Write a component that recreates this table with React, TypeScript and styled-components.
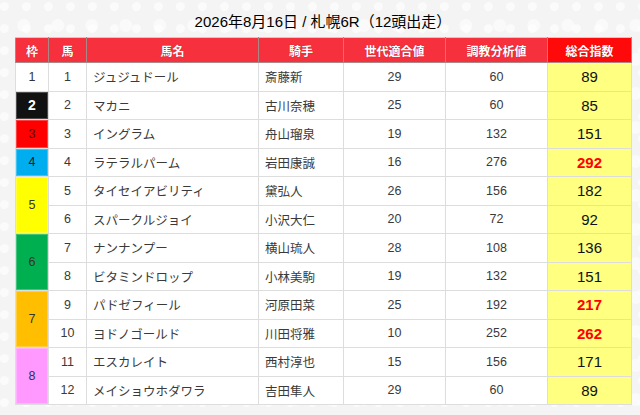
import styled, { createGlobalStyle } from "styled-components";

type Runner = {
    waku: number;
    umaban: number;
    name: string;
    jockey: string;
    sedai: number;
    chokyo: number;
    total: number;
};

const runners: Runner[] = [
    { waku: 1, umaban: 1, name: "ジュジュドール", jockey: "斎藤新", sedai: 29, chokyo: 60, total: 89 },
    { waku: 2, umaban: 2, name: "マカニ", jockey: "古川奈穂", sedai: 25, chokyo: 60, total: 85 },
    { waku: 3, umaban: 3, name: "イングラム", jockey: "舟山瑠泉", sedai: 19, chokyo: 132, total: 151 },
    { waku: 4, umaban: 4, name: "ラテラルパーム", jockey: "岩田康誠", sedai: 16, chokyo: 276, total: 292 },
    { waku: 5, umaban: 5, name: "タイセイアビリティ", jockey: "黛弘人", sedai: 26, chokyo: 156, total: 182 },
    { waku: 5, umaban: 6, name: "スパークルジョイ", jockey: "小沢大仁", sedai: 20, chokyo: 72, total: 92 },
    { waku: 6, umaban: 7, name: "ナンナンプー", jockey: "横山琉人", sedai: 28, chokyo: 108, total: 136 },
    { waku: 6, umaban: 8, name: "ビタミンドロップ", jockey: "小林美駒", sedai: 19, chokyo: 132, total: 151 },
    { waku: 7, umaban: 9, name: "パドゼフィール", jockey: "河原田菜", sedai: 25, chokyo: 192, total: 217 },
    { waku: 7, umaban: 10, name: "ヨドノゴールド", jockey: "川田将雅", sedai: 10, chokyo: 252, total: 262 },
    { waku: 8, umaban: 11, name: "エスカレイト", jockey: "西村淳也", sedai: 15, chokyo: 156, total: 171 },
    { waku: 8, umaban: 12, name: "メイショウホダワラ", jockey: "吉田隼人", sedai: 29, chokyo: 60, total: 89 },
];

// 枠の色
const wakuColors: Record<number, { bg: string; fg: string }> = {
    1: { bg: "#ffffff", fg: "#333333" },
    2: { bg: "#111111", fg: "#ffffff" },
    3: { bg: "#ff0000", fg: "#5a0000" },
    4: { bg: "#00aeef", fg: "#1a1a1a" },
    5: { bg: "#ffff00", fg: "#333333" },
    6: { bg: "#00b050", fg: "#333333" },
    7: { bg: "#ffbf00", fg: "#333333" },
    8: { bg: "#ff99ff", fg: "#333333" },
};

const App = () => {
    return (
        <Page>
            <GlobalStyle />
            <Title>2026年8月16日 / 札幌6R（12頭出走）</Title>
            <Table>
                <colgroup>
                    <col style={{ width: 33 }} />
                    <col style={{ width: 38 }} />
                    <col style={{ width: 172 }} />
                    <col style={{ width: 85 }} />
                    <col style={{ width: 102 }} />
                    <col style={{ width: 102 }} />
                    <col style={{ width: 84 }} />
                </colgroup>
                <thead>
                    <tr>
                        <HeadCell>枠</HeadCell>
                        <HeadCell>馬</HeadCell>
                        <HeadCell>馬名</HeadCell>
                        <HeadCell>騎手</HeadCell>
                        <HeadCell>世代適合値</HeadCell>
                        <HeadCell>調教分析値</HeadCell>
                        <HeadCell $accent>総合指数</HeadCell>
                    </tr>
                </thead>
                <tbody>
                    {runners.map((r, i) => {
                        const first = i === 0 || runners[i - 1].waku !== r.waku;
                        const span = runners.filter((x) => x.waku === r.waku).length;
                        const c = wakuColors[r.waku];
                        return (
                            <Row key={r.umaban}>
                                {first && (
                                    <WakuCell rowSpan={span} $bg={c.bg} $fg={c.fg} $bold={r.waku === 2}>
                                        {r.waku}
                                    </WakuCell>
                                )}
                                <NumCell>{r.umaban}</NumCell>
                                <TextCell>{r.name}</TextCell>
                                <TextCell>{r.jockey}</TextCell>
                                <NumCell>{r.sedai}</NumCell>
                                <NumCell>{r.chokyo}</NumCell>
                                <TotalCell $high={r.total >= 200}>{r.total}</TotalCell>
                            </Row>
                        );
                    })}
                </tbody>
            </Table>
        </Page>
    );
};
export default App;

const GlobalStyle = createGlobalStyle`
    html, body {
        margin: 0;
        padding: 0;
    }
    body {
        background-color: #f4f4f4;
        background-image:
            radial-gradient(circle at 20% 30%, rgba(255,255,255,0.6) 0 4px, transparent 5px),
            radial-gradient(circle at 70% 75%, rgba(255,255,255,0.5) 0 6px, transparent 7px);
        background-size: 22px 22px, 34px 34px;
        font-family: "Liberation Sans", "Noto Sans CJK JP", sans-serif;
    }
`;

const Page = styled.div`
    display: flex;
    flex-direction: column;
    align-items: flex-start;
    padding: 12px 0 0 15px;
    width: 640px;
    height: 415px;
    box-sizing: border-box;
    overflow: hidden;
`;

const Title = styled.h1`
    width: 616px;
    margin: 0 0 5px;
    text-align: center;
    font-size: 15px;
    line-height: 20px;
    font-weight: normal;
    color: #000;
`;

const Table = styled.table`
    width: 616px;
    border-collapse: collapse;
    table-layout: fixed;
    background: #fff;
    border: 1px solid #ddd;
`;

const HeadCell = styled.th<{ $accent?: boolean }>`
    height: 24px;
    padding: 0;
    background: ${(p) => (p.$accent ? "#ff0a0a" : "#f6303c")};
    color: #fff;
    font-size: 12px;
    font-weight: bold;
    text-shadow: 0 0 1px rgba(120, 0, 0, 0.6);
    border: 1px solid #a88;
    border-top-color: #ccc;
    text-align: center;
`;

const Row = styled.tr`
    height: 28.5px;
`;

const Cell = styled.td`
    padding: 0;
    border: 1px solid #dddddd;
    font-size: 12.5px;
    color: #3a3a3a;
`;

const WakuCell = styled(Cell)<{ $bg: string; $fg: string; $bold?: boolean }>`
    background: ${(p) => p.$bg};
    color: ${(p) => p.$fg};
    font-weight: ${(p) => (p.$bold ? "bold" : "normal")};
    font-size: ${(p) => (p.$bold ? "14px" : "12.5px")};
    text-align: center;
    box-shadow: inset 0 0 0 1px rgba(255, 255, 255, 0.25);
`;

const NumCell = styled(Cell)`
    text-align: center;
`;

const TextCell = styled(Cell)`
    text-align: left;
    padding-left: 6px;
    white-space: nowrap;
`;

const TotalCell = styled(Cell)<{ $high?: boolean }>`
    text-align: center;
    background: #ffff80;
    color: ${(p) => (p.$high ? "#ff0000" : "#111")};
    font-size: 15px;
    font-weight: ${(p) => (p.$high ? "bold" : "normal")};
`;
